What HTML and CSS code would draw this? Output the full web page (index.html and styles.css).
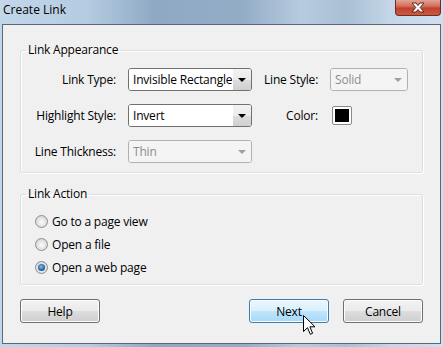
FILE: index.html
```html
<!DOCTYPE html>
<html lang="en">
	<head>
		<meta charset="UTF-8" />
		<meta name="viewport" content="width=device-width, initial-scale=1.0" />
		<title>Create Link</title>
		<link rel="stylesheet" href="styles.css">
	</head>
	<body>
		<div class="window">
			<div class="titlebar">
				<span class="title">Create Link</span>
				<div class="close">
					<svg width="16" height="11" viewBox="0 0 16 11">
						<path d="M2 1 H6 L8 3.5 L10 1 H14 L10.2 5.5 L14 10 H10 L8 7.5 L6 10 H2 L5.8 5.5 Z" fill="#fff" stroke="#5a2b24" stroke-width="1" stroke-linejoin="round" />
					</svg>
				</div>
			</div>
			<div class="client">
				<fieldset class="group appearance">
					<legend>Link Appearance</legend>
					<div class="grid">
						<span class="lbl">Link Type:</span>
						<div class="combo"><span class="value">Invisible Rectangle</span><span class="arrow"></span></div>
						<span class="lbl">Line Style:</span>
						<div class="combo disabled"><span class="value">Solid</span><span class="arrow"></span></div>

						<span class="lbl">Highlight Style:</span>
						<div class="combo"><span class="value">Invert</span><span class="arrow"></span></div>
						<span class="lbl">Color:</span>
						<div class="swatch"><span class="chip"></span></div>

						<span class="lbl">Line Thickness:</span>
						<div class="combo disabled"><span class="value">Thin</span><span class="arrow"></span></div>
					</div>
				</fieldset>

				<fieldset class="group action">
					<legend>Link Action</legend>
					<div class="radio-row"><span class="radio"></span>Go to a page view</div>
					<div class="radio-row"><span class="radio"></span>Open a file</div>
					<div class="radio-row"><span class="radio checked"></span>Open a web page</div>
				</fieldset>

				<div class="buttons">
					<button type="button" class="btn">Help</button>
					<button type="button" class="btn hover next">Next</button>
					<button type="button" class="btn">Cancel</button>
				</div>
			</div>
			<svg class="cursor" width="13" height="21" viewBox="0 0 13 21">
				<path d="M0.5 0.5 V16.5 L4.5 12.7 L7.3 19.3 L9.6 18.3 L6.9 11.8 H12 Z" fill="#fff" stroke="#000" stroke-width="1" stroke-linejoin="miter" />
			</svg>
		</div>
	</body>
</html>
```

FILE: styles.css
```css
body {
	margin: 0;
	padding: 0;
	font-family: "Segoe UI", "Open Sans", "Noto Sans", sans-serif;
	font-size: 12px;
	letter-spacing: -0.2px;
	color: #000;
}
.window {
	position: relative;
	width: 443px;
	height: 347px;
	display: flex;
	flex-direction: column;
	box-sizing: border-box;
	padding: 0 2px 3px 2px;
	background:
		linear-gradient(90deg, #c3d7ea 0%, #b4cbe0 20%, #8fa9c5 35%, #94adc7 55%, #b7cbdf 68%, #a9bfd4 78%, #c4d6e8 88%, #cfdff0 100%);
}
.titlebar {
	height: 24px;
	display: flex;
	align-items: flex-start;
	justify-content: space-between;
}
.title {
	margin-left: 1px;
	line-height: 20px;
	letter-spacing: 0;
	color: #000;
}
.close {
	width: 46px;
	height: 16px;
	box-sizing: border-box;
	border: 1px solid #6b2d25;
	border-top: none;
	border-radius: 0 0 4px 4px;
	background: linear-gradient(#e3a395 0%, #d2705f 40%, #c1422c 55%, #cc5a40 100%);
	display: flex;
	align-items: center;
	justify-content: center;
}
.client {
	flex: 1;
	background-color: #f0f0f0;
	border: 1px solid #5a6878;
	padding: 17px 17px 18px 17px;
}
.group {
	margin: 0;
	border: 1px solid #d5dfe5;
	border-radius: 3px;
	box-shadow: inset 1px 1px 0 #fff, 1px 1px 0 #fff;
}
.group legend {
	padding: 0 2px;
	margin-left: 5px;
	line-height: 16px;
}
.appearance {
	padding: 10px 0 9px 0;
}
.grid {
	display: grid;
	grid-template-columns: 95px 124px 54px 78px;
	grid-auto-rows: 23px;
	column-gap: 12px;
	row-gap: 13px;
	align-items: center;
}
.lbl {
	text-align: right;
	white-space: nowrap;
}
.combo {
	height: 23px;
	box-sizing: border-box;
	border: 1px solid #707070;
	border-radius: 3px;
	background-color: #fff;
	display: flex;
	align-items: stretch;
	overflow: hidden;
}
.combo .value {
	flex: 1;
	padding-left: 4px;
	line-height: 21px;
	white-space: nowrap;
	background-color: #fff;
}
.combo .arrow {
	width: 18px;
	background: linear-gradient(#f2f2f2 0%, #ebebeb 50%, #dddddd 51%, #cfcfcf 100%);
	position: relative;
}
.combo .arrow::after {
	content: "";
	position: absolute;
	left: 5px;
	top: 9px;
	border-left: 4px solid transparent;
	border-right: 4px solid transparent;
	border-top: 4px solid #000;
}
.combo.disabled {
	border-color: #adb2b5;
	background-color: #f4f4f4;
	color: #8d8d8d;
}
.combo.disabled .value {
	background-color: #f4f4f4;
}
.combo.disabled .arrow {
	background: #f4f4f4;
}
.combo.disabled .arrow::after {
	border-top-color: #a0a0a0;
}
.swatch {
	width: 20px;
	height: 19px;
	margin-left: 2px;
	box-sizing: border-box;
	border: 1px solid #8a8a8a;
	border-radius: 2px;
	background-color: #fdfdfd;
	display: flex;
	align-items: center;
	justify-content: center;
}
.chip {
	width: 14px;
	height: 13px;
	background-color: #000;
}
.action {
	margin-top: 13px;
	padding: 8px 0 5px 0;
}
.radio-row {
	height: 23px;
	padding-left: 14px;
	display: flex;
	align-items: center;
	gap: 4px;
}
.radio {
	width: 13px;
	height: 13px;
	box-sizing: border-box;
	border-radius: 50%;
	border: 1px solid #8e8f8f;
	background: radial-gradient(circle at 50% 55%, #fcfcfc 0%, #e6e6e6 45%, #c6c6c6 100%);
	position: relative;
}
.radio.checked::after {
	content: "";
	position: absolute;
	left: 2px;
	top: 2px;
	width: 7px;
	height: 7px;
	border-radius: 50%;
	background: radial-gradient(circle at 45% 40%, #8cc4ec 0%, #2d6fb0 50%, #0f3d72 100%);
}
.buttons {
	margin-top: 14px;
	display: flex;
	gap: 14px;
}
.btn {
	width: 80px;
	height: 24px;
	padding: 0;
	font-family: inherit;
	font-size: 12px;
	letter-spacing: inherit;
	color: #000;
	border: 1px solid #707070;
	border-radius: 3px;
	background: linear-gradient(#f2f2f2 0%, #ebebeb 50%, #dddddd 51%, #cfcfcf 100%);
	box-shadow: inset 0 0 0 1px #fcfcfc;
}
.next {
	margin-left: auto;
}
.btn.hover {
	border-color: #3c7fb1;
	background: linear-gradient(#eaf6fd 0%, #d9f0fc 50%, #bee6fd 51%, #a7d9f5 100%);
}
.cursor {
	position: absolute;
	left: 303px;
	top: 315px;
}
```
